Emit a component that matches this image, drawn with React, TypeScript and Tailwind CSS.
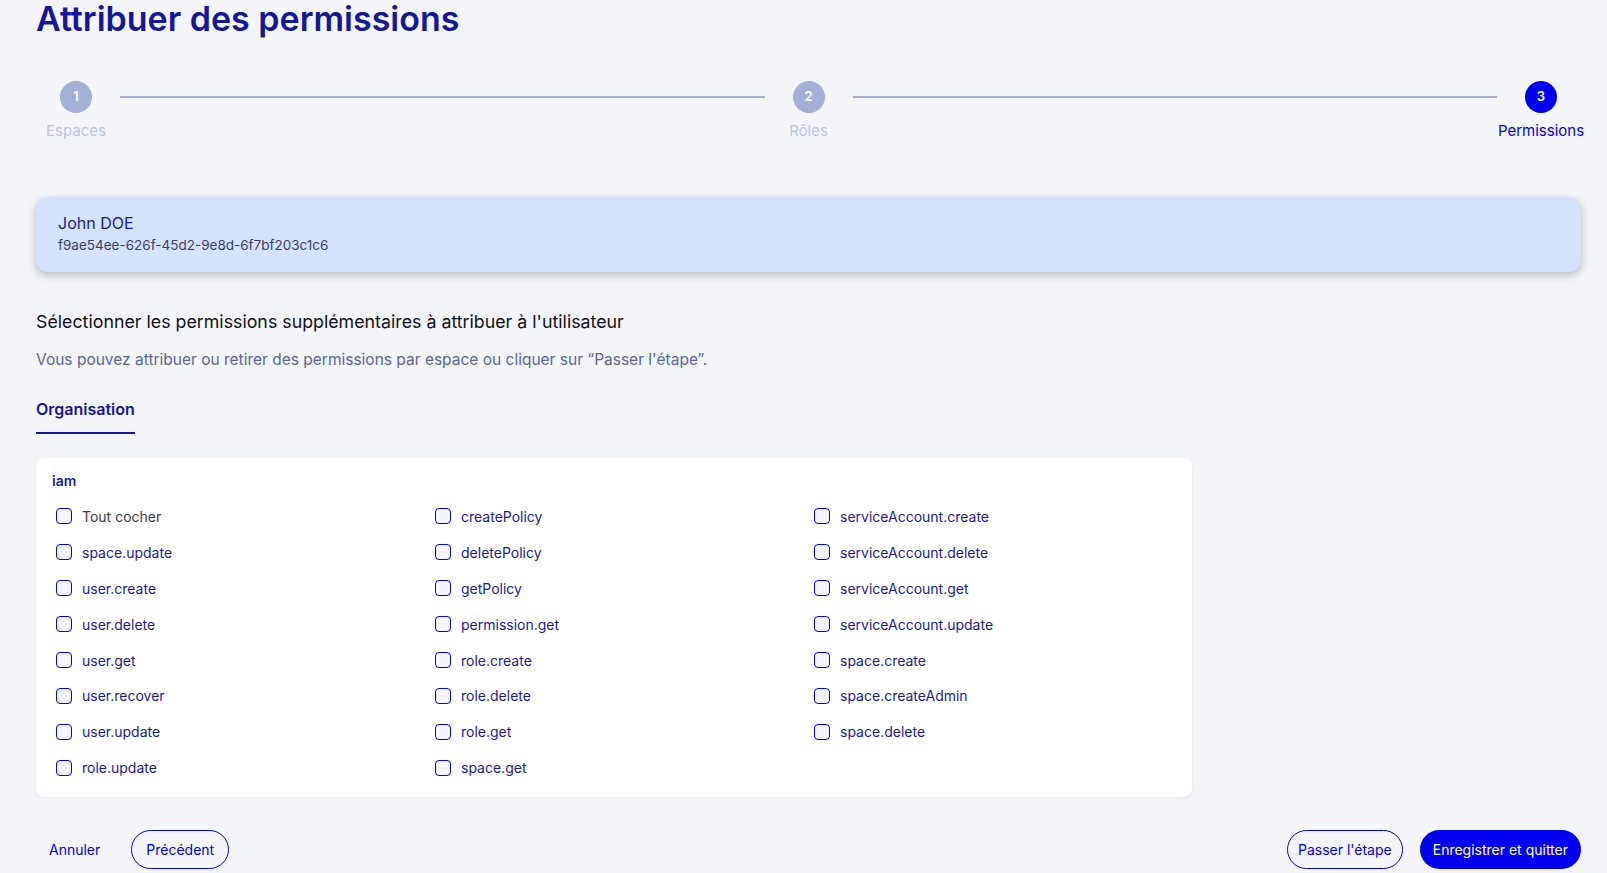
import React from "react";

const font = { fontFamily: "Inter, 'Noto Sans', sans-serif" };

const col1 = ["space.update", "user.create", "user.delete", "user.get", "user.recover", "user.update", "role.update"];
const col2 = ["createPolicy", "deletePolicy", "getPolicy", "permission.get", "role.create", "role.delete", "role.get", "space.get"];
const col3 = [
  "serviceAccount.create",
  "serviceAccount.delete",
  "serviceAccount.get",
  "serviceAccount.update",
  "space.create",
  "space.createAdmin",
  "space.delete",
];

function Step({ n, label, active }: { n: number; label: string; active?: boolean }) {
  return (
    <div className="flex w-20 shrink-0 flex-col items-center">
      <div
        className={`flex h-8 w-8 items-center justify-center rounded-full text-[13px] font-semibold text-white ${
          active ? "bg-[#0000ee]" : "bg-[#a3afd6]"
        }`}
      >
        {n}
      </div>
      <div className={`mt-2 text-[15px] leading-5 whitespace-nowrap ${active ? "text-[#0000ee]" : "text-[#bcc6e4]"}`}>
        {label}
      </div>
    </div>
  );
}

function Line() {
  return <div className="mx-1 mt-[15px] h-[2px] flex-1 bg-[#a3afd6]" />;
}

function Check({ label, dark }: { label: string; dark?: boolean }) {
  return (
    <label className="flex h-[35.9px] items-center pl-1">
      <span className="h-4 w-4 shrink-0 rounded-[4px] border-[1.5px] border-[#0000ee] bg-[#f4f5f9]" />
      <span className={`ml-[10px] text-[14px] ${dark ? "text-[#3a3a44]" : "text-[#1c1c8e]"}`}>{label}</span>
    </label>
  );
}

export default function App() {
  return (
    <div className="min-h-screen bg-[#f4f5f9] pl-9 pr-[26px] pt-[2px]" style={font}>
      <h1 className="text-[34px] font-semibold leading-none text-[#16169a]">Attribuer des permissions</h1>

      {/* Stepper */}
      <div className="mt-[45px] flex items-start">
        <Step n={1} label="Espaces" />
        <Line />
        <Step n={2} label="Rôles" />
        <Line />
        <Step n={3} label="Permissions" active />
      </div>

      {/* User card */}
      <div className="mt-14 h-[75px] rounded-xl bg-[#d4e3fb] pl-[22px] pt-[16px] shadow-[0_3px_8px_rgba(0,0,0,0.25)]">
        <div className="text-[16px] leading-5 text-[#1a1a8c]">John DOE</div>
        <div className="mt-[3px] text-[13.5px] leading-[18px] text-[#3e3e5e]">f9ae54ee-626f-45d2-9e8d-6f7bf203c1c6</div>
      </div>

      <h2 className="mt-[38px] text-[17.8px] leading-6 text-[#111118]">
        Sélectionner les permissions supplémentaires à attribuer à l'utilisateur
      </h2>
      <p className="mt-[15px] text-[15.5px] leading-[22px] text-[#5b6797]">
        Vous pouvez attribuer ou retirer des permissions par espace ou cliquer sur “Passer l'étape”.
      </p>

      {/* Tabs */}
      <div className="mt-[26px]">
        <div className="inline-block border-b-2 border-[#16169a] pb-3 text-[16px] font-semibold leading-[22px] text-[#16169a]">
          Organisation
        </div>
      </div>

      {/* Permissions panel */}
      <div className="mt-6 w-[1156px] rounded-lg bg-white pb-[11px] pl-4 pr-4 pt-[14px] shadow-[0_1px_3px_rgba(0,0,0,0.08)]">
        <div className="text-[14px] font-semibold leading-[18px] text-[#1c1c8e]">iam</div>
        <div className="mt-[8.5px] grid grid-cols-[379px_379px_1fr]">
          <div>
            <Check label="Tout cocher" dark />
            {col1.map((p) => (
              <Check key={p} label={p} />
            ))}
          </div>
          <div>
            {col2.map((p) => (
              <Check key={p} label={p} />
            ))}
          </div>
          <div>
            {col3.map((p) => (
              <Check key={p} label={p} />
            ))}
          </div>
        </div>
      </div>

      {/* Footer */}
      <div className="mt-[33px] flex items-center justify-between">
        <div className="flex items-center">
          <button className="h-[39px] px-[13px] text-[14px] text-[#0000ee]">Annuler</button>
          <button className="ml-[18px] h-[39px] rounded-full border border-[#0000ee] px-[14px] text-[14px] text-[#0000ee]">
            Précédent
          </button>
        </div>
        <div className="flex items-center gap-[17px]">
          <button className="h-[39px] rounded-full border border-[#0000ee] px-[10px] text-[14px] text-[#0000ee]">
            Passer l'étape
          </button>
          <button className="h-[39px] rounded-full bg-[#0000ee] px-[13px] text-[14px] text-white">Enregistrer et quitter</button>
        </div>
      </div>
    </div>
  );
}
